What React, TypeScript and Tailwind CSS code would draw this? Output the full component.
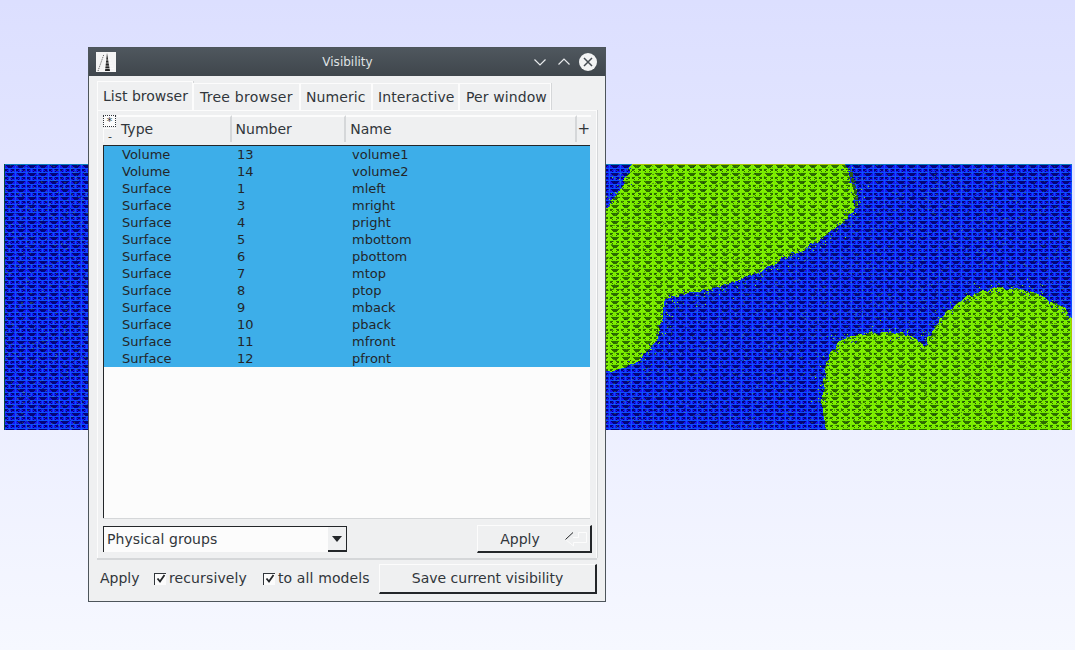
import React from "react";

const rows: [string, string, string][] = [
  ["Volume", "13", "volume1"],
  ["Volume", "14", "volume2"],
  ["Surface", "1", "mleft"],
  ["Surface", "3", "mright"],
  ["Surface", "4", "pright"],
  ["Surface", "5", "mbottom"],
  ["Surface", "6", "pbottom"],
  ["Surface", "7", "mtop"],
  ["Surface", "8", "ptop"],
  ["Surface", "9", "mback"],
  ["Surface", "10", "pback"],
  ["Surface", "11", "mfront"],
  ["Surface", "12", "pfront"],
];

function Tile({ id, bg, dark, light }: { id: string; bg: string; dark: string; light: string }) {
  return (
    <pattern id={id} width="11" height="8" patternUnits="userSpaceOnUse" x="4" y="164">
      <rect width="11" height="8" fill={bg} />
      <g fill={light} shapeRendering="crispEdges">
        <rect x="0" y="0" width="11" height="1" />
        <rect x="0" y="0" width="1" height="8" />
        <rect x="5" y="4" width="1" height="4" />
        <rect x="1" y="4" width="10" height="1" />
      </g>
      <g fill={dark} shapeRendering="crispEdges">
        <rect x="2" y="1" width="8" height="1" />
        <rect x="3" y="2" width="6" height="1" />
        <rect x="4" y="3" width="4" height="1" />
        <rect x="1" y="5" width="3" height="1" />
        <rect x="1" y="6" width="2" height="1" />
        <rect x="7" y="5" width="3" height="1" />
        <rect x="8" y="6" width="2" height="1" />
        <rect x="3" y="7" width="1" height="1" />
        <rect x="7" y="7" width="1" height="1" />
      </g>
    </pattern>
  );
}

type P = [number, number];
const upperPts: P[] = [
  [632, 164], [845, 164], [850, 178], [856, 195], [855, 207], [842, 224], [825, 236], [808, 247], [785, 257], [765, 268], [742, 279], [720, 287], [695, 292], [672, 296], [664, 303], [662, 322], [654, 343], [642, 358], [625, 368], [600, 373], [600, 218], [606, 208], [620, 190],
];
const lowerPts: P[] = [
  [826, 430], [822, 405], [823, 380], [829, 355], [842, 340], [860, 334], [890, 332], [908, 335], [918, 342], [925, 346], [932, 332], [945, 314], [965, 298], [990, 289], [1015, 288], [1040, 295], [1060, 306], [1072, 318], [1072, 430],
];

function makeRng(seed: number) {
  let s = seed;
  return () => {
    s = (s * 1664525 + 1013904223) % 4294967296;
    return s / 4294967296;
  };
}

function jag(pts: P[], seed: number): string {
  const r = makeRng(seed);
  const out: string[] = [];
  pts.forEach((a, i) => {
    const b = pts[(i + 1) % pts.length];
    const n = Math.max(1, Math.round(Math.hypot(b[0] - a[0], b[1] - a[1]) / 4));
    const flat = (a[1] === 164 && b[1] === 164) || a[0] === 1072 || a[1] === 430 || a[0] === 600;
    for (let k = 0; k < n; k++) {
      const j = flat || k === 0 ? 0 : 1;
      out.push(`${Math.round(a[0] + ((b[0] - a[0]) * k) / n + j * (r() * 4 - 2))},${Math.round(a[1] + ((b[1] - a[1]) * k) / n + j * (r() * 4 - 2))}`);
    }
  });
  return out.join(" ");
}

function speckles(pts: P[], seed: number) {
  const r = makeRng(seed);
  const out: { x: number; y: number; c: string }[] = [];
  pts.forEach((a, i) => {
    const b = pts[(i + 1) % pts.length];
    const len = Math.hypot(b[0] - a[0], b[1] - a[1]);
    const flat = (a[1] === 164 && b[1] === 164) || a[0] === 1072 || a[1] === 430 || a[0] === 600 || b[0] === 600;
    if (flat) return;
    const nx = (b[1] - a[1]) / len;
    const ny = -(b[0] - a[0]) / len;
    const count = Math.round(len / 1.2);
    for (let k = 0; k < count; k++) {
      const t = r();
      const outside = r() < 0.45;
      const d = outside ? r() * r() * 16 : -r() * r() * 8;
      const x = Math.round(a[0] + (b[0] - a[0]) * t + nx * d);
      const y = Math.round(a[1] + (b[1] - a[1]) * t + ny * d);
      const c = outside ? (r() < 0.45 ? "#7ee800" : "#3aa020") : r() < 0.5 ? "#1414e0" : "#2c6400";
      if (y > 165 && y < 429 && x > 5 && x < 1071) out.push({ x, y, c });
    }
  });
  return out;
}

function noise(seed: number, count: number): string {
  const r = makeRng(seed);
  let d = "";
  for (let i = 0; i < count; i++) {
    const x = 5 + Math.floor(r() * 1066);
    const y = 165 + Math.floor(r() * 264);
    const w = r() < 0.3 ? 2 : 1;
    d += `M${x} ${y}h${w}v1h-${w}z`;
  }
  return d;
}

const dots = [...speckles(upperPts, 7), ...speckles(lowerPts, 11)];
const upperPoly = jag(upperPts, 3);
const lowerPoly = jag(lowerPts, 5);
const noiseLight = noise(21, 9000);
const noiseDark = noise(33, 6000);

function Mesh() {
  return (
    <svg width="1075" height="267" viewBox="0 164 1075 267" className="block">
      <defs>
        <Tile id="b" bg="#1616f2" dark="#04047a" light="#0c50ff" />
        <Tile id="g" bg="#84f000" dark="#2c6c00" light="#74ea00" />
      </defs>
      <rect x="4" y="164" width="1068" height="266" fill="url(#b)" />
      <polygon points={upperPoly} fill="url(#g)" shapeRendering="crispEdges" />
      <polygon points={lowerPoly} fill="url(#g)" shapeRendering="crispEdges" />
      <path d="M851 172L854 186L857 198L856 208" stroke="#2c5c18" strokeWidth="3" fill="none" strokeDasharray="5 1" shapeRendering="crispEdges" />
      <g shapeRendering="crispEdges">
        <path d={noiseLight} fill="#8cf000" fillOpacity="0.22" />
        <path d={noiseDark} fill="#000030" fillOpacity="0.35" />
        {dots.map((d, i) => (
          <rect key={i} x={d.x} y={d.y} width="1" height="1" fill={d.c} />
        ))}
      </g>
      <rect x="4" y="164" width="1068" height="1" fill="#0a7fc0" />
      <rect x="632" y="164" width="213" height="1" fill="#a8c800" />
      <rect x="4" y="164" width="1" height="266" fill="#045040" />
      <rect x="1071" y="318" width="1" height="112" fill="#a8c800" />
    </svg>
  );
}

function Check({ label }: { label: string }) {
  return (
    <div className="flex items-center gap-[3px]">
      <div className="w-[12px] h-[12px] bg-[#fcfcfc] border-l border-t border-[#31363b] flex items-center justify-center">
        <svg width="10" height="10" viewBox="0 0 10 10">
          <path d="M1.5 4.5L4 7.5L8.5 1" stroke="#232629" strokeWidth="1.8" fill="none" />
        </svg>
      </div>
      <span className="tracking-[0.12px]">{label}</span>
    </div>
  );
}

const tabClass =
  "h-[27px] flex items-center whitespace-nowrap border-t border-l border-r border-[#fcfcfc] shadow-[1px_0_0_#d5d7d9]";

export default function App() {
  return (
    <div
      className="relative w-[1075px] h-[650px] overflow-hidden bg-gradient-to-b from-[#dcdfff] to-[#f6f8ff] flex flex-col pt-[164px] text-[14px] text-[#31363b]"
      style={{ fontFamily: '"DejaVu Sans", sans-serif' }}
    >
      <Mesh />
      <div className="absolute left-[88px] top-[47px] w-[518px] h-[555px] flex flex-col bg-[#eff0f1] border border-[#4d555b]">
        <div className="h-[28px] shrink-0 flex items-center bg-gradient-to-b from-[#4f575e] to-[#3f464c] text-[#dfe1e3] text-[12px] relative pl-[7px] pr-[8px]">
          <svg width="20" height="20" viewBox="0 0 20 20" className="shrink-0">
            <rect width="20" height="20" fill="#f4f4f4" />
            <path d="M2 19L8 2" stroke="#555" strokeWidth="1" strokeDasharray="1 1" />
            <path d="M11 1L14 19H9Z" fill="#222" />
            <path d="M9 8H15M8 11H16M8 14H17M8 16.5H18" stroke="#fff" strokeWidth="0.6" />
          </svg>
          <div className="flex-1 text-center pl-[47px]">Visibility</div>
          <div className="flex items-center gap-[8px]">
            <svg width="16" height="16" viewBox="0 0 16 16">
              <path d="M2.5 5.5L8 11L13.5 5.5" stroke="#e8eaec" strokeWidth="1.2" fill="none" />
            </svg>
            <svg width="16" height="16" viewBox="0 0 16 16" className="mr-[-1px]">
              <path d="M2.5 10.5L8 5L13.5 10.5" stroke="#e8eaec" strokeWidth="1.2" fill="none" />
            </svg>
            <svg width="18" height="18" viewBox="0 0 18 18">
              <circle cx="9" cy="9" r="9" fill="#f2f3f4" />
              <path d="M5 5L13 13M13 5L5 13" stroke="#454c52" strokeWidth="1.5" />
            </svg>
          </div>
        </div>

        <div className="flex-1 flex flex-col pl-[8px] pr-[8px] pt-[5px]">
          <div className="flex items-end h-[29px] shrink-0">
            <div className="h-[29px] w-[96px] pl-[5px] pt-[1px] flex items-center whitespace-nowrap border-t border-l border-r border-[#fcfcfc] shadow-[1px_0_0_#d5d7d9]">
              List browser
            </div>
            <div className={`${tabClass} w-[107px] pl-[6px] tracking-[0.25px]`}>Tree browser</div>
            <div className={`${tabClass} w-[72px] pl-[5px] tracking-[0.1px]`}>Numeric</div>
            <div className={`${tabClass} w-[87px] pl-[5px] tracking-[0.1px]`}>Interactive</div>
            <div className={`${tabClass} w-[92px] pl-[6px] tracking-[0.1px]`}>Per window</div>
          </div>

          <div className="h-[448px] shrink-0 flex flex-col border-t border-l border-r border-[#fcfcfc] shadow-[1px_0_0_#d5d7d9] pl-[5px] pt-[4px]">
            <div className="h-[27px] shrink-0 flex w-[488px]">
              <div className="w-[14px] shrink-0 flex flex-col text-[11px] leading-none">
                <div className="h-[12px] w-[13px] bg-[#fcfcfc] border border-dotted border-[#31363b] flex items-center justify-center">
                  *
                </div>
                <div className="h-[14px] mt-[1px] w-[13px] pt-[2px] flex items-center justify-center border-l border-t border-[#fcfcfc]">-</div>
              </div>
              <div className="w-[115px] pl-[4px] flex items-center border-t-2 border-[#fcfcfc] border-r-2 border-r-[#d5d7d9]">Type</div>
              <div className="w-[115px] pl-[4px] flex items-center border-t-2 border-[#fcfcfc] border-r-2 border-r-[#d5d7d9]">Number</div>
              <div className="w-[232px] pl-[4px] flex items-center border-t-2 border-[#fcfcfc] border-r-2 border-r-[#d5d7d9]">Name</div>
              <div className="flex-1 pr-[1px] flex items-center justify-center border-t-2 border-[#fcfcfc] text-[15px]">+</div>
            </div>

            <div className="mt-[3px] h-[373px] shrink-0 w-[487px] bg-[#fcfcfc] border-t border-l border-t-[#232629] border-l-[#232629] shadow-[0_1px_0_#d5d7d9] text-[13px]">
              {rows.map(([t, n, m]) => (
                <div key={m} className="h-[17px] flex items-center bg-[#3daee9] text-[#232629]">
                  <div className="w-[130px] pl-[18px]">{t}</div>
                  <div className="w-[115px] pl-[3px]">{n}</div>
                  <div className="pl-[3px]">{m}</div>
                </div>
              ))}
            </div>

            <div className="mt-[7px] flex items-start">
              <div className="mt-[1px] w-[244px] h-[26px] bg-[#fcfcfc] border-t border-l border-t-[#232629] border-l-[#232629] border-r border-r-[#232629] flex items-center pl-[3px] relative tracking-[0.06px]">
                <span>Physical groups</span>
                <div className="absolute right-0 top-0 bottom-0 w-[18px] bg-[#eff0f1] border-b-2 border-[#232629] flex items-center justify-center">
                  <svg width="12" height="8" viewBox="0 0 12 8">
                    <path d="M1 1H11L6 7Z" fill="#232629" />
                  </svg>
                </div>
              </div>
              <div className="ml-[130px] w-[115px] h-[28px] pt-[1px] flex items-center border-t border-l border-[#fcfcfc] border-r-2 border-b-2 border-r-[#232629] border-b-[#232629] relative">
                <span className="absolute left-[12px] right-[40px] text-center">Apply</span>
                <svg width="24" height="17" viewBox="0 0 24 17" className="absolute right-[2px] top-[4px]">
                  <path d="M9 7.5H14.5V2.5H22.5V12.5H9.5V16L1.5 9.5" stroke="#fcfcfc" strokeWidth="1" fill="none" />
                  <path d="M1.5 9.5L9 2.5" stroke="#232629" strokeWidth="1" />
                </svg>
              </div>
            </div>
          </div>

          <div className="h-[2px] shrink-0 bg-[#d5d7d9]" />

          <div className="flex items-center mt-[4px] h-[30px] pl-[3px]">
            <div className="w-[54px] pb-[1px]">Apply</div>
            <div className="w-[109px] pb-[1px]">
              <Check label="recursively" />
            </div>
            <div className="w-[116px] pb-[1px]">
              <Check label="to all models" />
            </div>
            <div className="w-[218px] h-[30px] flex items-center justify-center border-t border-l border-[#fcfcfc] border-r-2 border-b-2 border-r-[#232629] border-b-[#232629]">
              Save current visibility
            </div>
          </div>
        </div>
      </div>
    </div>
  );
}
